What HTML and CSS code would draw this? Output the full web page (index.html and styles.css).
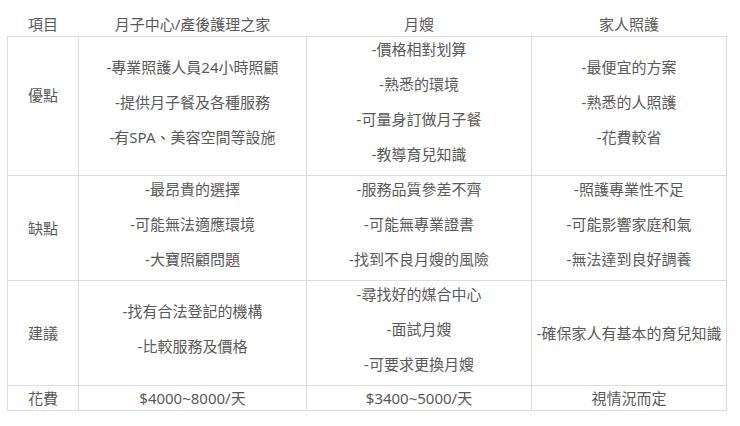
FILE: index.html
```html
<!DOCTYPE html>
<html lang="zh-Hant">
<head>
<meta charset="utf-8">
<link rel="stylesheet" href="styles.css">
</head>
<body>
<div class="page">
<table class="compare">
  <thead>
    <tr>
      <th class="c1">項目</th>
      <th class="c2">月子中心/產後護理之家</th>
      <th class="c3">月嫂</th>
      <th class="c4">家人照護</th>
    </tr>
  </thead>
  <tbody>
    <tr>
      <td class="lift">優點</td>
      <td><p>-專業照護人員24小時照顧</p><p>-提供月子餐及各種服務</p><p>-有SPA、美容空間等設施</p></td>
      <td><p>-價格相對划算</p><p>-熟悉的環境</p><p>-可量身訂做月子餐</p><p>-教導育兒知識</p></td>
      <td><p>-最便宜的方案</p><p>-熟悉的人照護</p><p>-花費較省</p></td>
    </tr>
    <tr>
      <td>缺點</td>
      <td><p>-最昂貴的選擇</p><p>-可能無法適應環境</p><p>-大寶照顧問題</p></td>
      <td><p>-服務品質參差不齊</p><p>-可能無專業證書</p><p>-找到不良月嫂的風險</p></td>
      <td><p>-照護專業性不足</p><p>-可能影響家庭和氣</p><p>-無法達到良好調養</p></td>
    </tr>
    <tr>
      <td>建議</td>
      <td><p>-找有合法登記的機構</p><p>-比較服務及價格</p></td>
      <td><p>-尋找好的媒合中心</p><p>-面試月嫂</p><p>-可要求更換月嫂</p></td>
      <td>-確保家人有基本的育兒知識</td>
    </tr>
    <tr class="short">
      <td>花費</td>
      <td>$4000~8000/天</td>
      <td>$3400~5000/天</td>
      <td>視情況而定</td>
    </tr>
  </tbody>
</table>
</div>
</body>
</html>
```

FILE: styles.css
```css
html, body {
  margin: 0;
  padding: 0;
  background: #ffffff;
}

.page {
  padding: 12px 0 0 7px;
}

.compare {
  border-collapse: collapse;
  width: 720px;
  table-layout: fixed;
  font-family: "Noto Sans", "Noto Sans CJK TC", sans-serif;
  font-size: 15px;
  color: #595959;
}

.compare .c1 { width: 71px; }
.compare .c2 { width: 228px; }
.compare .c3 { width: 225px; }
.compare .c4 { width: 195px; }

.compare th {
  font-weight: normal;
  height: 24px;
  line-height: 24px;
  padding: 0;
  text-align: center;
  vertical-align: middle;
}

.compare td {
  border: 1px solid #dcdcdc;
  padding: 0;
  text-align: center;
  vertical-align: middle;
  line-height: 24px;
  height: 104px;
}

.compare td.lift {
  padding-bottom: 22px;
}

.compare tr.short td {
  height: 23px;
}

.compare p {
  margin: 0 0 11px 0;
  line-height: 24px;
  white-space: nowrap;
}

.compare p:last-child {
  margin-bottom: 9px;
}
```
